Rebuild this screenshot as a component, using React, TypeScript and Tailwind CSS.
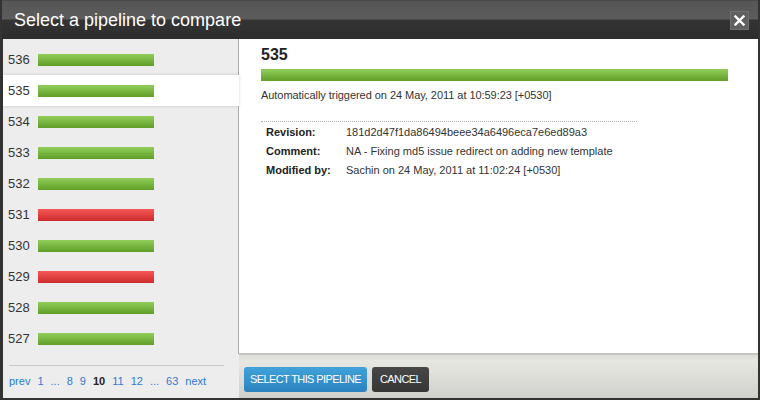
import React from "react";

const rows: { n: number; ok: boolean }[] = [
  { n: 536, ok: true },
  { n: 535, ok: true },
  { n: 534, ok: true },
  { n: 533, ok: true },
  { n: 532, ok: true },
  { n: 531, ok: false },
  { n: 530, ok: true },
  { n: 529, ok: false },
  { n: 528, ok: true },
  { n: 527, ok: true },
];

const green = "bg-[linear-gradient(#92cd5a,#609f27)]";
const red = "bg-[linear-gradient(#f65858,#cb2b2b)]";

export default function App() {
  return (
    <div className="w-[760px] h-[400px] flex flex-col bg-[#333] font-['Liberation_Sans',Arial,sans-serif] text-[#333] overflow-hidden">
      {/* Title bar */}
      <div className="h-[39px] shrink-0 flex items-center justify-between pl-[12px] pr-[9px] bg-[linear-gradient(#3e3e3e_0px,#565656_1px,#5c5c5c_19px,#343434_20px,#2c2c2c_39px)] border-l-[2px] border-r-[2px] border-[#333]">
        <div className="text-white text-[18px] leading-[22px] pt-[1px]">Select a pipeline to compare</div>
        <div className="w-[19px] h-[19px] mt-[1px] bg-[#606060] border border-[#707070] flex items-center justify-center">
          <svg width="11" height="11" viewBox="0 0 11 11">
            <path d="M1.5 1.5 L9.5 9.5 M9.5 1.5 L1.5 9.5" stroke="#fff" strokeWidth="2.4" strokeLinecap="square" />
          </svg>
        </div>
      </div>
      {/* Body */}
      <div className="flex flex-1 pl-[3px] pr-[2px] pb-[2px] min-h-0">
        {/* Left panel */}
        <div className="w-[236px] shrink-0 bg-[#ededed] flex flex-col">
          <div className="h-[5px] border-r border-[#a7a7a7]" />
          {rows.map((r) => {
            const sel = r.n === 535;
            return (
              <div
                key={r.n}
                className={
                  sel
                    ? "relative z-10 h-[31px] flex items-center pl-[5px] bg-white shadow-[0_0_3px_rgba(0,0,0,0.18)]"
                    : "h-[31px] flex items-center pl-[5px] border-r border-[#a7a7a7]"
                }
              >
                <span className="w-[30px] text-[13px] leading-[15px] text-[#333]">{r.n}</span>
                <span className={`w-[116px] h-[12px] ${r.ok ? green : red}`} />
              </div>
            );
          })}
          <div className="mt-[11px] ml-[6px] mr-[15px] h-px bg-[#c8c8c8]" />
          <div className="mt-[9px] ml-[6px] flex gap-[7px] text-[11px] leading-[13px] text-[#2f7ad1]">
            <span>prev</span>
            <span>1</span>
            <span>...</span>
            <span>8</span>
            <span>9</span>
            <span className="font-bold text-[#222]">10</span>
            <span>11</span>
            <span>12</span>
            <span>...</span>
            <span>63</span>
            <span>next</span>
          </div>
        </div>
        {/* Right column */}
        <div className="flex-1 flex flex-col min-w-0">
          <div className="flex-1 bg-white pl-[22px] pr-[30px] pt-[7px]">
            <div className="text-[16px] leading-[18px] font-bold text-[#222]">535</div>
            <div className={`mt-[5px] h-[12px] ${green}`} />
            <div className="mt-[8px] text-[11px] leading-[13px] tracking-[-0.05px] text-[#333]">
              Automatically triggered on 24 May, 2011 at 10:59:23 [+0530]
            </div>
            <div className="mt-[19px] w-[376px] border-t border-dotted border-[#b5b5b5]" />
            <div className="text-[11px] text-[#333]">
              <div className="h-[19px] flex items-center pl-[5px] pt-[1px]">
                <span className="w-[80px] font-bold text-[#222]">Revision:</span>
                <span>181d2d47f1da86494beee34a6496eca7e6ed89a3</span>
              </div>
              <div className="h-[19px] flex items-center pl-[5px] pt-[1px]">
                <span className="w-[80px] font-bold text-[#222]">Comment:</span>
                <span>NA - Fixing md5 issue redirect on adding new template</span>
              </div>
              <div className="h-[19px] flex items-center pl-[5px] pt-[1px]">
                <span className="w-[80px] font-bold text-[#222]">Modified by:</span>
                <span>Sachin on 24 May, 2011 at 11:02:24 [+0530]</span>
              </div>
            </div>
          </div>
          <div className="h-[45px] shrink-0 border-t-[2px] border-[#c6c6c4] bg-[linear-gradient(#dcdcd8_0px,#e7e7e2_6px,#d0d0cc_43px)] flex items-start gap-[5px] pl-[5px] pt-[12px]">
            <button className="h-[25px] w-[123px] rounded-[3px] bg-[linear-gradient(#42a2da,#2a82bf)] text-white text-[11px] tracking-[-0.6px] leading-[25px] text-center">
              SELECT THIS PIPELINE
            </button>
            <button className="h-[25px] w-[57px] rounded-[3px] bg-[linear-gradient(#474747,#363636)] text-white text-[11px] tracking-[-0.6px] leading-[25px] text-center">
              CANCEL
            </button>
          </div>
        </div>
      </div>
    </div>
  );
}
